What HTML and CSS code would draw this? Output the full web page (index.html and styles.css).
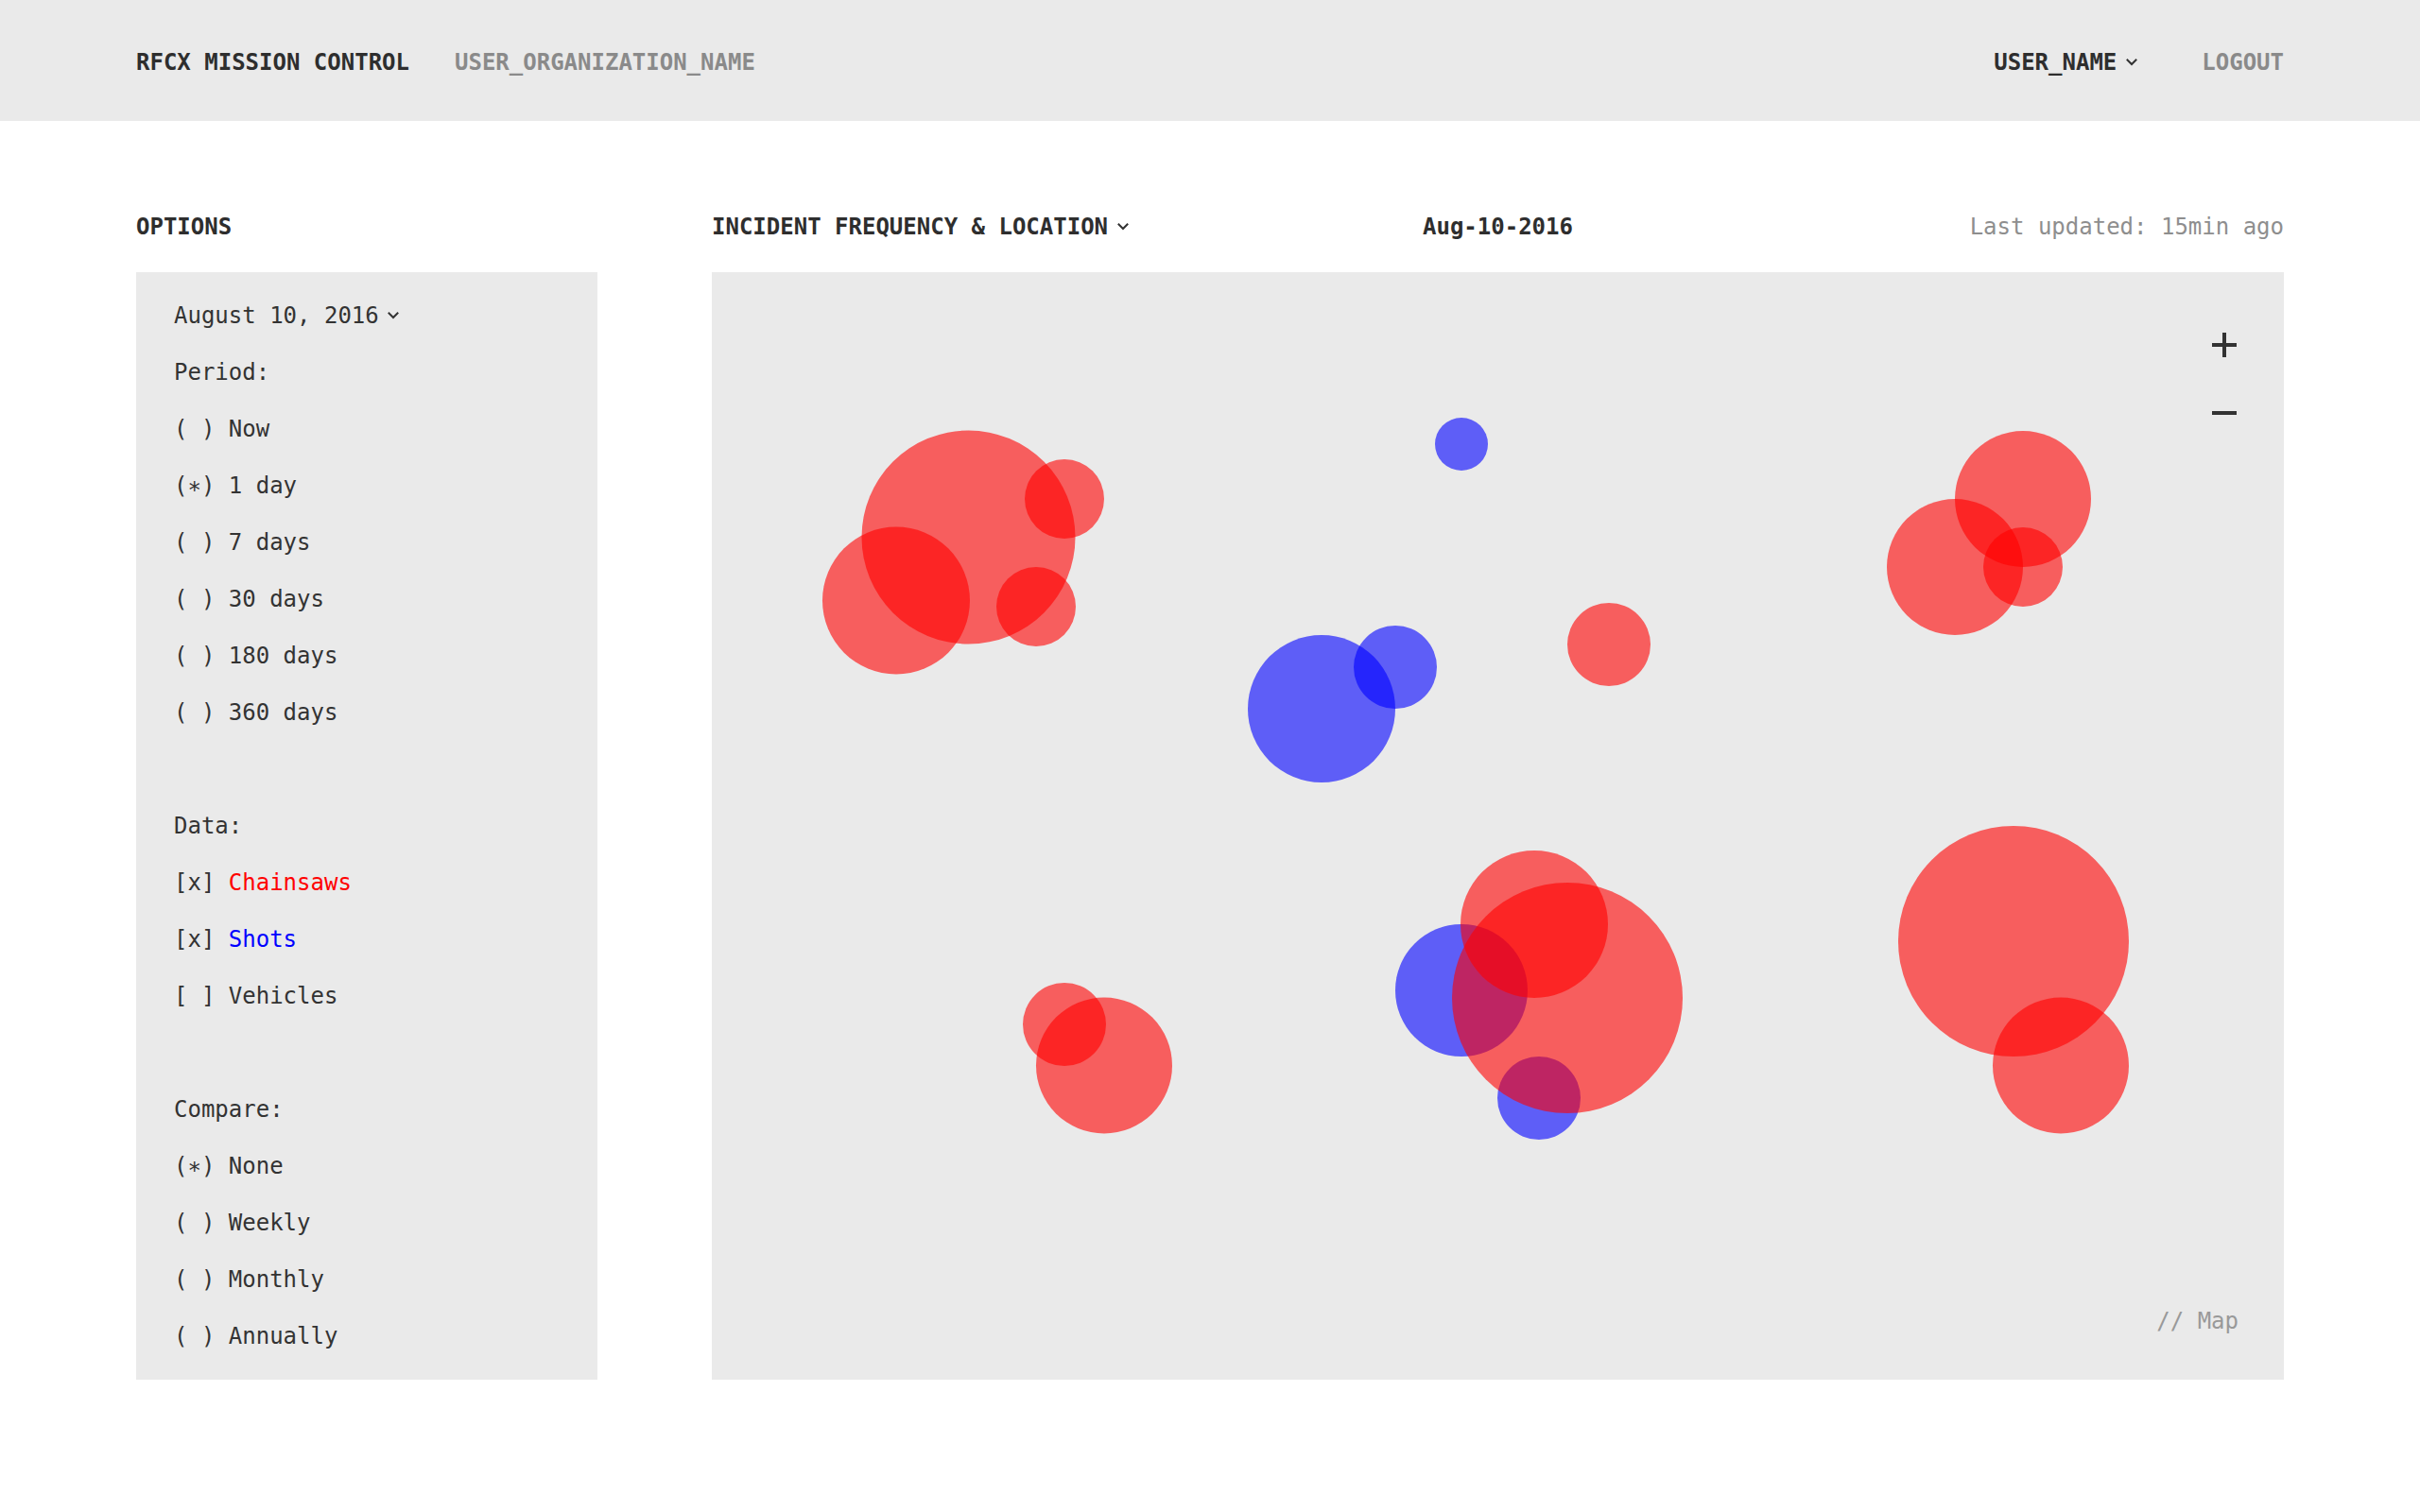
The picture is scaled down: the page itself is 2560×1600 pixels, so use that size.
FILE: index.html
```html
<!DOCTYPE html>
<html lang="en">
<head>
<meta charset="utf-8">
<title>RFCX Mission Control</title>
<link rel="stylesheet" href="styles.css">
</head>
<body>
<header class="topbar">
  <div class="topbar-left">
    <span class="brand">RFCX MISSION CONTROL</span>
    <span class="org">USER_ORGANIZATION_NAME</span>
  </div>
  <div class="topbar-right">
    <span class="user">USER_NAME<svg class="chev" width="12" height="8" viewBox="0 0 12 8"><polyline points="1.5,1.5 6,6 10.5,1.5"/></svg></span>
    <span class="logout">LOGOUT</span>
  </div>
</header>

<main class="main">
  <section class="sidebar">
    <div class="section-head"><span class="bold">OPTIONS</span></div>
    <div class="panel">
      <div class="row">August 10, 2016<svg class="chev chev-sm" width="12" height="8" viewBox="0 0 12 8"><polyline points="1.5,1.5 6,6 10.5,1.5"/></svg></div>
      <div class="row">Period:</div>
      <div class="row">( ) Now</div>
      <div class="row">(∗) 1 day</div>
      <div class="row">( ) 7 days</div>
      <div class="row">( ) 30 days</div>
      <div class="row">( ) 180 days</div>
      <div class="row">( ) 360 days</div>
      <div class="row"></div>
      <div class="row">Data:</div>
      <div class="row">[x] <span class="red">Chainsaws</span></div>
      <div class="row">[x] <span class="blue">Shots</span></div>
      <div class="row">[ ] Vehicles</div>
      <div class="row"></div>
      <div class="row">Compare:</div>
      <div class="row">(∗) None</div>
      <div class="row">( ) Weekly</div>
      <div class="row">( ) Monthly</div>
      <div class="row">( ) Annually</div>
    </div>
  </section>

  <section class="content">
    <div class="section-head content-head">
      <span class="bold title">INCIDENT FREQUENCY &amp; LOCATION<svg class="chev" width="12" height="8" viewBox="0 0 12 8"><polyline points="1.5,1.5 6,6 10.5,1.5"/></svg></span>
      <span class="bold date">Aug-10-2016</span>
      <span class="updated">Last updated: 15min ago</span>
    </div>
    <div class="map">
      <svg class="bubbles" xmlns="http://www.w3.org/2000/svg">
        <g class="shots">
          <circle cx="793" cy="182" r="28"/>
          <circle cx="645" cy="462" r="78"/>
          <circle cx="723" cy="418" r="44"/>
          <circle cx="793" cy="760" r="70"/>
          <circle cx="875" cy="874" r="44"/>
        </g>
        <g class="saws">
          <circle cx="271.5" cy="280.5" r="113"/>
          <circle cx="195" cy="347.5" r="78"/>
          <circle cx="373" cy="240" r="42"/>
          <circle cx="343" cy="354" r="42"/>
          <circle cx="949" cy="394" r="44"/>
          <circle cx="1387" cy="240" r="72"/>
          <circle cx="1315" cy="312" r="72"/>
          <circle cx="1387" cy="312" r="42"/>
          <circle cx="373" cy="796" r="44"/>
          <circle cx="415" cy="839.5" r="72"/>
          <circle cx="870" cy="690" r="78"/>
          <circle cx="905" cy="768" r="122"/>
          <circle cx="1377" cy="708" r="122"/>
          <circle cx="1427" cy="839.5" r="72"/>
        </g>
      </svg>
      <div class="zoom">
        <svg class="zoom-btn" width="26" height="26" viewBox="0 0 26 26"><path d="M13 0V26M0 13H26"/></svg>
        <svg class="zoom-btn" width="26" height="26" viewBox="0 0 26 26"><path d="M0 13H26"/></svg>
      </div>
      <div class="map-label">// Map</div>
    </div>
  </section>
</main>
</body>
</html>
```

FILE: styles.css
```css
* {
  box-sizing: border-box;
}

html, body {
  margin: 0;
  padding: 0;
  background: #ffffff;
}

body {
  font-family: "DejaVu Sans Mono", "Liberation Mono", monospace;
  font-size: 24px;
  line-height: 60px;
  color: #333333;
}

.topbar {
  height: 128px;
  background: #eaeaea;
  padding: 36px 144px 32px;
  display: flex;
  justify-content: space-between;
  align-items: flex-start;
  font-weight: bold;
}

.topbar-left,
.topbar-right {
  display: flex;
  align-items: center;
  height: 60px;
}

.brand {
  color: #2e2e2e;
}

.org {
  color: #8a8a8a;
  margin-left: 48px;
}

.user {
  display: inline-flex;
  align-items: center;
  color: #2e2e2e;
}

.logout {
  color: #8a8a8a;
  margin-left: 68px;
}

.chev {
  margin-left: 10px;
  fill: none;
  stroke: #333333;
  stroke-width: 2;
  stroke-linecap: square;
}

.chev-sm {
  margin-left: 9px;
}

.main {
  display: flex;
  gap: 121px;
  padding: 82px 144px 0;
}

.sidebar {
  width: 488px;
  flex: none;
}

.content {
  flex: 1;
  min-width: 0;
}

.section-head {
  height: 60px;
  margin-bottom: 18px;
}

.bold {
  font-weight: bold;
  color: #2e2e2e;
}

.content-head {
  display: grid;
  grid-template-columns: 1fr auto 1fr;
  align-items: center;
}

.title {
  display: inline-flex;
  align-items: center;
  justify-self: start;
}

.date {
  justify-self: center;
}

.updated {
  justify-self: end;
  color: #8e8e8e;
}

.panel {
  background: #eaeaea;
  padding: 16px 40px;
}

.row {
  height: 60px;
  display: flex;
  align-items: center;
  white-space: pre;
}

.red {
  color: #ff0000;
}

.blue {
  color: #0000ff;
}

.map {
  position: relative;
  height: 1172px;
  background: #eaeaea;
  overflow: hidden;
}

.bubbles {
  position: absolute;
  left: 0;
  top: 0;
  width: 100%;
  height: 100%;
}

.shots circle {
  fill: #0000ff;
  fill-opacity: 0.6;
}

.saws circle {
  fill: #ff0000;
  fill-opacity: 0.6;
}

.zoom {
  position: absolute;
  top: 64px;
  right: 50px;
  display: flex;
  flex-direction: column;
  gap: 46px;
}

.zoom-btn {
  display: block;
  fill: none;
  stroke: #333333;
  stroke-width: 4;
}

.map-label {
  position: absolute;
  right: 48px;
  bottom: 32px;
  color: #999999;
}
```
